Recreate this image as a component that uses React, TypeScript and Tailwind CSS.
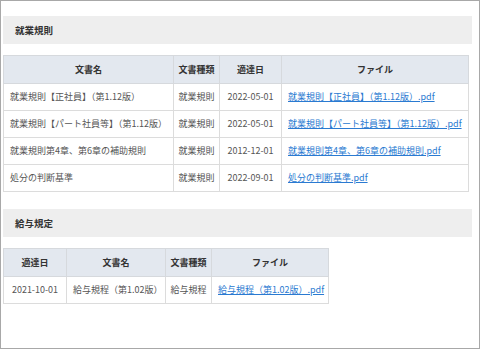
import React from "react";

const font = { fontFamily: '"Noto Sans CJK JP", "Noto Sans", sans-serif' };

type Col = { label: string; w: number; align: "left" | "center" };

function DocTable({ cols, rows, linkCol }: { cols: Col[]; rows: string[][]; linkCol: number }) {
  const total = cols.reduce((s, c) => s + c.w, 0);
  return (
    <table className="border-collapse text-[9px] text-[#555]" style={{ tableLayout: "fixed", width: total }}>
      <colgroup>
        {cols.map((c, i) => (
          <col key={i} style={{ width: c.w }} />
        ))}
      </colgroup>
      <thead>
        <tr className="h-[28px] bg-[#e3e8ef]">
          {cols.map((c, i) => (
            <th key={i} className="border border-[#d6d9dd] font-bold text-[#333] text-center px-0 whitespace-nowrap">
              {c.label}
            </th>
          ))}
        </tr>
      </thead>
      <tbody>
        {rows.map((r, ri) => (
          <tr key={ri} className="h-[27px] bg-white">
            {r.map((cell, ci) => (
              <td
                key={ci}
                className={
                  "border border-[#dcdcdc] whitespace-nowrap overflow-visible " +
                  (cols[ci].align === "center" ? "text-center px-0" : "text-left px-[6px]")
                }
              >
                {ci === linkCol ? (
                  <a className="text-[#2a7ad1] underline" href="#">
                    {cell}
                  </a>
                ) : (
                  cell
                )}
              </td>
            ))}
          </tr>
        ))}
      </tbody>
    </table>
  );
}

function SectionHeader({ title }: { title: string }) {
  return (
    <div className="h-[28px] bg-[#eeeeee] flex items-center pl-[12px] mr-[7px] text-[9.5px] font-bold text-[#333]">
      {title}
    </div>
  );
}

export default function App() {
  return (
    <div className="w-[480px] h-[349px] bg-white border border-[#a8a8a8] pl-[2px] pt-[15px]" style={font}>
      <SectionHeader title="就業規則" />
      <div className="mt-[11px]">
        <DocTable
          linkCol={3}
          cols={[
            { label: "文書名", w: 170, align: "left" },
            { label: "文書種類", w: 46, align: "center" },
            { label: "適達日", w: 62, align: "center" },
            { label: "ファイル", w: 187, align: "left" },
          ]}
          rows={[
            ["就業規則【正社員】（第1.12版）", "就業規則", "2022-05-01", "就業規則【正社員】（第1.12版）.pdf"],
            ["就業規則【パート社員等】（第1.12版）", "就業規則", "2022-05-01", "就業規則【パート社員等】（第1.12版）.pdf"],
            ["就業規則第4章、第6章の補助規則", "就業規則", "2012-12-01", "就業規則第4章、第6章の補助規則.pdf"],
            ["処分の判断基準", "就業規則", "2022-09-01", "処分の判断基準.pdf"],
          ]}
        />
      </div>
      <div className="mt-[17px]">
        <SectionHeader title="給与規定" />
      </div>
      <div className="mt-[11px]">
        <DocTable
          linkCol={3}
          cols={[
            { label: "適達日", w: 63, align: "center" },
            { label: "文書名", w: 99, align: "left" },
            { label: "文書種類", w: 46, align: "center" },
            { label: "ファイル", w: 117, align: "left" },
          ]}
          rows={[["2021-10-01", "給与規程（第1.02版）", "給与規程", "給与規程（第1.02版）.pdf"]]}
        />
      </div>
    </div>
  );
}
